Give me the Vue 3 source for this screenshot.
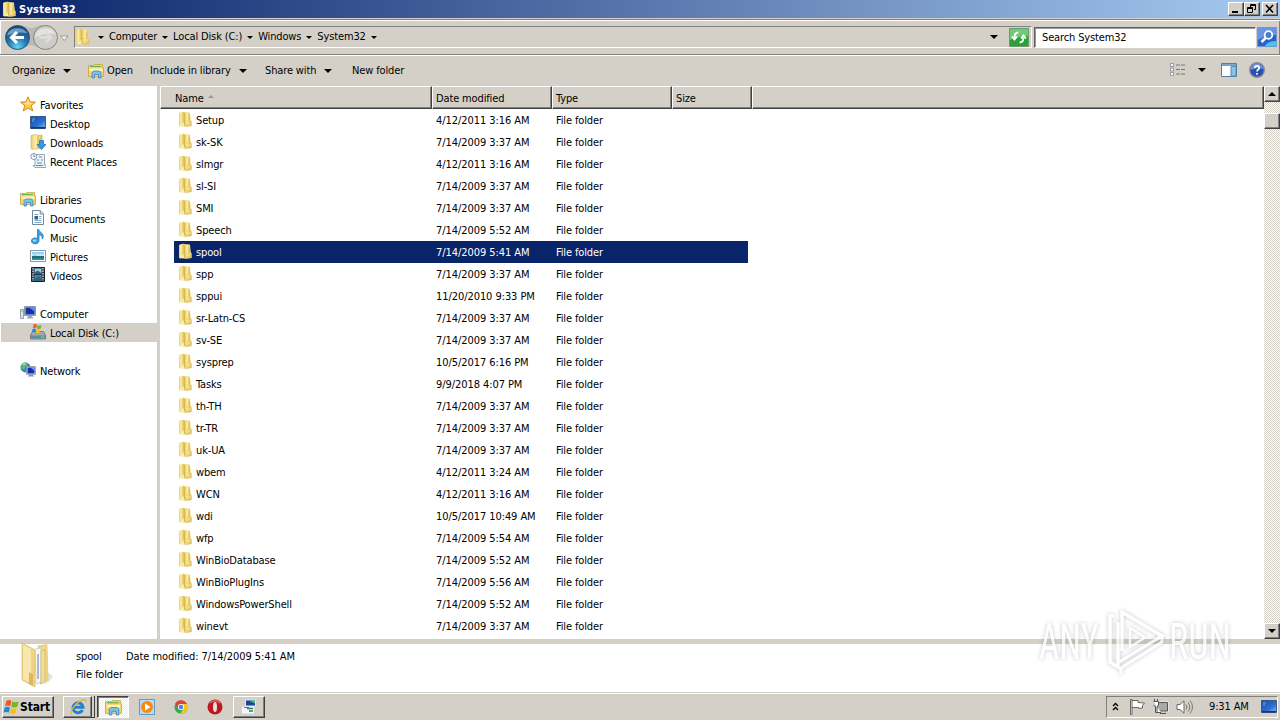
<script setup>
import { ref } from "vue";

const crumbs = ["Computer", "Local Disk (C:)", "Windows", "System32"];

const groups = [
  {
    label: "Favorites",
    icon: "star",
    items: [
      { label: "Desktop", icon: "desktop" },
      { label: "Downloads", icon: "downloads" },
      { label: "Recent Places", icon: "recent" },
    ],
  },
  {
    label: "Libraries",
    icon: "library",
    items: [
      { label: "Documents", icon: "document" },
      { label: "Music", icon: "music" },
      { label: "Pictures", icon: "picture" },
      { label: "Videos", icon: "video" },
    ],
  },
  {
    label: "Computer",
    icon: "computer",
    items: [{ label: "Local Disk (C:)", icon: "disk", active: true }],
  },
  { label: "Network", icon: "network", items: [] },
];

const files = [
  ["Setup", "4/12/2011 3:16 AM"],
  ["sk-SK", "7/14/2009 3:37 AM"],
  ["slmgr", "4/12/2011 3:16 AM"],
  ["sl-SI", "7/14/2009 3:37 AM"],
  ["SMI", "7/14/2009 3:37 AM"],
  ["Speech", "7/14/2009 5:52 AM"],
  ["spool", "7/14/2009 5:41 AM"],
  ["spp", "7/14/2009 3:37 AM"],
  ["sppui", "11/20/2010 9:33 PM"],
  ["sr-Latn-CS", "7/14/2009 3:37 AM"],
  ["sv-SE", "7/14/2009 3:37 AM"],
  ["sysprep", "10/5/2017 6:16 PM"],
  ["Tasks", "9/9/2018 4:07 PM"],
  ["th-TH", "7/14/2009 3:37 AM"],
  ["tr-TR", "7/14/2009 3:37 AM"],
  ["uk-UA", "7/14/2009 3:37 AM"],
  ["wbem", "4/12/2011 3:24 AM"],
  ["WCN", "4/12/2011 3:16 AM"],
  ["wdi", "10/5/2017 10:49 AM"],
  ["wfp", "7/14/2009 5:54 AM"],
  ["WinBioDatabase", "7/14/2009 5:52 AM"],
  ["WinBioPlugIns", "7/14/2009 5:56 AM"],
  ["WindowsPowerShell", "7/14/2009 5:52 AM"],
  ["winevt", "7/14/2009 3:37 AM"],
];

const selected = ref("spool");
</script>

<template>
  <div class="screen">
    <svg class="defs" width="0" height="0">
      <defs>
        <linearGradient id="gFolder" x1="0" x2="1" y1="0" y2="0">
          <stop offset="0" stop-color="#e9cf70" />
          <stop offset=".45" stop-color="#fbefae" />
          <stop offset="1" stop-color="#e3c357" />
        </linearGradient>
        <linearGradient id="gFront" x1="0" x2="1" y1="0" y2="1">
          <stop offset="0" stop-color="#fdf3b8" />
          <stop offset="1" stop-color="#dfbd52" />
        </linearGradient>
        <linearGradient id="gScreen" x1="0" x2="1" y1="0" y2="1">
          <stop offset="0" stop-color="#1c49a8" />
          <stop offset=".6" stop-color="#2b6fd0" />
          <stop offset="1" stop-color="#7ec4f2" />
        </linearGradient>
        <linearGradient id="gSky" x1="0" x2="0" y1="0" y2="1">
          <stop offset="0" stop-color="#7cc8f0" />
          <stop offset=".5" stop-color="#d8f0f8" />
          <stop offset=".55" stop-color="#2d7f78" />
          <stop offset="1" stop-color="#2a8ac8" />
        </linearGradient>
        <radialGradient id="gBack" cx=".5" cy=".9" r=".8">
          <stop offset="0" stop-color="#5fd6fa" />
          <stop offset=".5" stop-color="#2379b4" />
          <stop offset="1" stop-color="#174a7c" />
        </radialGradient>
        <symbol id="folder" viewBox="0 0 16 16">
          <path d="M2 2 6 .8 13 1.800l.8 7.500.8 1V15l-6 .8-6.200-.8z" fill="#f0dc8c" />
          <path d="M2 2 6.500.8v13.700L3.500 15.500 2 14.800z" fill="url(#gFolder)" />
          <path d="M6.500 1.200 8 2v12l-1.500 1z" fill="#d9b84e" />
          <path d="M8 2.200 12.500 1.600l.8 8.400v4.500L8 14.500z" fill="url(#gFolder)" />
          <path d="m8 10 6.200.2v4.600L8.500 15.500z" fill="url(#gFront)" stroke="#d0ab45" stroke-width=".4" />
          <path d="M3 14.800 7 11v4z" fill="#fbefa8" />
          <path d="M12 3.500V9" stroke="#d6b550" stroke-width=".8" />
        </symbol>
        <symbol id="star" viewBox="0 0 16 16">
          <path d="m8 .8 2 5 5.500.3-4.300 3.500 1.600 5.400L8 12l-4.800 3 1.600-5.400L.5 6.100 6 5.800z" fill="#ffc94a" stroke="#e08a1c" />
          <path d="m8 3 1.200 3.700 3.300.2-5 2.200-4-2.200 3.200-.2z" fill="#ffe99a" />
        </symbol>
        <symbol id="desktop" viewBox="0 0 16 16">
          <path d="M.5 1.500h15v12H.5z" fill="url(#gScreen)" stroke="#3c5a88" />
          <path d="M1 12h14v1.500H1z" fill="#183868" />
          <path d="M2 4h3M2 6h2" stroke="#6cb0ec" />
        </symbol>
        <symbol id="downloads" viewBox="0 0 16 16">
          <path d="M1 1.500 6 .3 8 1.500v13L2 15.400l-1-.8zM8 1.500l4-.5V14l-4 1z" fill="url(#gFolder)" stroke="#d5ae49" stroke-width=".6" />
          <path d="M9.500 6.500h4v4H16L11.500 15.500 7 10.500h2.500z" fill="#2e9be6" stroke="#1b68b4" stroke-width=".7" />
        </symbol>
        <symbol id="recent" viewBox="0 0 16 16">
          <path d="M5 1.500h9.500V12H16v2.500H5l-2-2h2z" fill="#eef3f7" stroke="#7e94a6" stroke-width=".8" />
          <circle cx="3.800" cy="3.500" r="3" fill="#fff" stroke="#8395a5" />
          <path d="M3.800 1.500v2h1.500M9 4h3M7 7h2m2 0h2M7 10h5M6 12.500h7" stroke="#5587ac" fill="none" />
        </symbol>
        <symbol id="library" viewBox="0 0 16 16">
          <path d="M.5 2.500h5l1-1h8v3h1v9H.5z" fill="#f5d86c" stroke="#cba53a" stroke-width=".8" />
          <path d="M2 3.500h11" stroke="#62b565" stroke-width="1.200" />
          <path d="M1.500 5.500h13V8h-13z" fill="#fff2b4" />
          <path d="M4 15V9.500L5.500 8h6L13 9.500V15h-2.500v-3.500h-4V15z" fill="#7bc0ea" stroke="#3a86bd" stroke-width=".8" />
        </symbol>
        <symbol id="document" viewBox="0 0 16 16">
          <path d="M2.500.5h7.800L13.500 4v10.500h-11z" fill="#fff" stroke="#73889d" />
          <path d="M10.200.5V4h3.300" fill="#d7e7f4" stroke="#73889d" />
          <path d="M4.500 4.500h4m-4 8h7m-7-2h7m-2.500-2h2.500m-2.500-2h2.500" stroke="#7fa6cb" />
          <path d="M4.500 6h3.500v3.500H4.500z" fill="#2e5f93" />
        </symbol>
        <symbol id="music" viewBox="0 0 16 16">
          <path d="M7.500.5h1.300c.4 2.600 4.700 3.500 4.500 7.200-.1 1-.5 1.800-1.300 2.500 1-3-1.300-4-3-4.400v6.200A3.800 3 0 1 1 7.500 9.500z" fill="#3ba0e2" stroke="#1e6fae" stroke-width=".7" />
          <ellipse cx="4.600" cy="11.500" rx="1.700" ry="1" fill="#a5e0ff" />
        </symbol>
        <symbol id="picture" viewBox="0 0 16 16">
          <path d="M.5 2.500h15v11H.5z" fill="#fff" stroke="#8496a8" />
          <path d="M2 4h12v8H2z" fill="url(#gSky)" />
          <path d="M2 8.500c3-2 6 1 12-.5v2H2z" fill="#286d69" />
        </symbol>
        <symbol id="video" viewBox="0 0 16 16">
          <path d="M1.500.5h13v14h-13z" fill="#27313c" stroke="#18202a" />
          <path d="M3 1v13M13 1v13" stroke="#e6edf2" stroke-width="1.200" stroke-dasharray="1.500 1" />
          <path d="M4.500 1.500h7V7h-7z" fill="#9ccbe9" />
          <path d="M4.500 8h7v6h-7z" fill="#3f86cc" />
          <path d="m4.500 5.500 3-2 4 2.500v1h-7zm0 7 4-3.500 3 2.500V14h-7z" fill="#2d667c" />
        </symbol>
        <symbol id="computer" viewBox="0 0 16 16">
          <path d="M.5 4.500h3v9h-3z" fill="#dfe4e8" stroke="#7e8b98" stroke-width=".8" />
          <path d="M1.200 6h1.600" stroke="#5bb54c" />
          <path d="M4.500 1.500h11v9h-11z" fill="#c9d3df" stroke="#8996a8" />
          <path d="M5.500 2.500h9v7h-9z" fill="#1730a8" />
          <path d="M9 2.500h5.500v4z" fill="#5e8ce2" />
          <path d="M8.500 11h3l2 2.500h-7z" fill="#9aa6b4" />
        </symbol>
        <symbol id="flag" viewBox="0 0 16 16">
          <path d="M3.200 1.600c2-1.200 3.300-.8 4.700.2L6.900 6.800C5.400 5.900 4 6 2 6.900z" fill="#ef5a24" />
          <path d="M8.800 2.300c2 1 3.700 1 6 0l-1.400 5c-2 1-3.700 1-5.600 0z" fill="#72b829" />
          <path d="M1.600 8c2-1 3.500-1 5 0l-1.200 5C4 12 2.400 12 .4 12.800z" fill="#2687d8" />
          <path d="M7.500 8.400c1.800 1 3.400 1 5.500 0l-1.400 5c-2 1-3.400 1-5.200 0z" fill="#fbbd18" />
        </symbol>
        <symbol id="disk" viewBox="0 0 16 16">
          <path d="m.5 11 2-3.500h11l2 3.500v4H.5z" fill="#9ea9b2" stroke="#65727e" stroke-width=".8" />
          <path d="M1 11.500h14v3H1z" fill="#5f8fa4" />
          <path d="M11 13h3" stroke="#60e05c" stroke-width="1.400" />
          <use href="#flag" x="1" y="-.5" width="12" height="11" />
        </symbol>
        <symbol id="network" viewBox="0 0 16 16">
          <circle cx="5.500" cy="5.500" r="5" fill="#2a86d0" />
          <path d="M2 2.500C4 0 7 .5 8 2L5.500 4.500 4 8 1 6z" fill="#5fbd61" />
          <path d="M3 2.500 5.500 2" stroke="#c5f1ee" />
          <path d="M6.500 4.500h9v8h-9z" fill="#d5dee8" stroke="#8592a5" stroke-width=".8" />
          <path d="M7.500 5.500h7v6h-7z" fill="#152fac" />
          <path d="M10.500 5.500h4V9z" fill="#7395ec" />
          <path d="M9 13h4l1 1.500H8z" fill="#8591a0" />
        </symbol>
      </defs>
    </svg>

    <header class="titlebar">
      <svg class="title-icon" width="16" height="16"><use href="#folder" /></svg>
      <span class="title-text">System32</span>
      <div class="win-buttons">
        <button class="win-btn"><svg width="12" height="10"><path d="M2 8h6" stroke="#000" stroke-width="2" /></svg></button>
        <button class="win-btn">
          <svg width="12" height="10" fill="none" stroke="#000"><path d="M4.500 3V.5h5v5H8M4 1.500h6M1.500 3.500h5v5h-5zM1 4.500h6" /></svg>
        </button>
        <button class="win-btn close"><svg width="12" height="10"><path d="m2 1 7 7.500M9 1 2 8.500" stroke="#000" stroke-width="1.600" /></svg></button>
      </div>
    </header>

    <nav class="navbar">
      <svg class="travel" width="70" height="32" viewBox="0 0 70 32">
        <path d="M17 4.500C24 3 28 7 31 7s8-4 15-2.500V27c-7 1.500-12-3-15-3s-7 4-14 3z" fill="#b9b9b5" />
        <circle cx="17.500" cy="16.500" r="12" fill="url(#gBack)" stroke="#31536f" />
        <path d="M7.500 12.500a11 9 0 0 1 20 0q-10-3-20 2z" fill="#9cc5de" opacity=".65" />
        <path d="m17 11-5.500 5.500 5.500 5.500M12 16.500H24" fill="none" stroke="#fff" stroke-width="3" />
        <circle cx="45.500" cy="16.500" r="12" fill="#cdccc9" stroke="#858585" />
        <path d="M35.500 13.500a10.500 9 0 0 1 20 0q-10-3-20 3z" fill="#e4e3e1" />
        <path d="m46 11.500 5 5-5 5M39 16.500h11" fill="none" stroke="#dddcd9" stroke-width="2.500" />
        <path d="M60.500 15h7.500L64.200 19.500z" fill="#f5f5f5" stroke="#888" stroke-width=".8" />
      </svg>
      <div class="address">
        <svg class="address-icon" width="17" height="17"><use href="#folder" /></svg>
        <i class="caret small"></i>
        <template v-for="crumb in crumbs" :key="crumb">
          <span class="crumb">{{ crumb }}</span>
          <i class="caret small"></i>
        </template>
        <i class="caret address-drop"></i>
        <svg class="refresh" width="20" height="19" viewBox="0 0 20 19">
          <path d="M.5.5h19v18H.5z" fill="#27a331" stroke="#6d9a70" />
          <path d="M1 1h18v7Q9 8 1 12z" fill="#72c877" />
          <path d="M9.500 4.500q-4 0-4 5M3 8.500l2.500 3L8 8.500M10.500 14.500q4 0 4-5M12 10.500l2.500-3 2.500 3" fill="none" stroke="#fff" stroke-width="1.800" />
        </svg>
      </div>
      <div class="search">Search System32</div>
      <svg class="search-btn" width="20" height="20" viewBox="0 0 20 20">
        <path d="M.5.5h19v19H.5z" fill="#2563cc" stroke="#7695cb" />
        <path d="M1 1h18v7Q9 8 1 13z" fill="#6d94e0" />
        <path d="M8 19q3-5 11-5v5z" fill="#46c5f1" />
        <circle cx="11.500" cy="8" r="3.800" fill="#477bd5" stroke="#fff" stroke-width="1.800" />
        <path d="m8.500 11-4 4" stroke="#fff" stroke-width="2.500" />
      </svg>
    </nav>

    <div class="toolbar">
      <span class="tool organize">Organize <i class="caret"></i></span>
      <span class="tool open"><svg width="16" height="16"><use href="#library" /></svg>Open</span>
      <span class="tool include">Include in library <i class="caret"></i></span>
      <span class="tool share">Share with <i class="caret"></i></span>
      <span class="tool">New folder</span>
      <div class="tool-right">
        <svg width="16" height="13" viewBox="0 0 16 13">
          <path d="M.5.5h3v3h-3zm0 4.500h3v3h-3zm0 4.500h3v3h-3z" fill="#fff" stroke="#7f8790" stroke-width=".8" />
          <path d="M6 2h4m1 0h4M6 6.500h4m1 0h4M6 11h4m1 0h4" stroke="#69788f" />
        </svg>
        <i class="caret view-caret"></i>
        <svg width="16" height="14" viewBox="0 0 16 14">
          <path d="M.5.500h15v13H.5z" fill="#fff" stroke="#567b9c" />
          <path d="M1 1h14v2H1z" fill="#7aa4c8" />
          <path d="M10 3.500h5V13h-5z" fill="#8cc4e5" stroke="#4b8fb8" />
        </svg>
        <svg class="help" width="16" height="16" viewBox="0 0 16 16">
          <circle cx="8" cy="8" r="7.300" fill="#2b4fae" stroke="#848e9f" stroke-width="1.400" />
          <path d="M2 7a6 5.500 0 0 1 12 0Q8 5 2 8z" fill="#6e90da" />
          <path d="M5.800 6q0-2.200 2.200-2.200T10.200 6q0 1-1.200 1.800-1 .6-1 1.700M8 11v1.800" fill="none" stroke="#fff" stroke-width="1.700" />
        </svg>
      </div>
    </div>

    <main class="body">
      <aside class="tree">
        <section v-for="g in groups" :key="g.label" class="group">
          <div class="node root">
            <svg width="16" height="16"><use :href="'#' + g.icon" /></svg><span>{{ g.label }}</span>
          </div>
          <div v-for="n in g.items" :key="n.label" class="node" :class="{ active: n.active }">
            <svg width="16" height="16"><use :href="'#' + n.icon" /></svg><span>{{ n.label }}</span>
          </div>
        </section>
      </aside>

      <section class="list">
        <div class="columns">
          <div class="col name">Name <i class="sort"></i></div>
          <div class="col date">Date modified</div>
          <div class="col type">Type</div>
          <div class="col size">Size</div>
          <div class="col rest"></div>
        </div>
        <div
          v-for="[name, date] in files"
          :key="name"
          class="row"
          :class="{ selected: name === selected }"
          @click="selected = name"
        >
          <svg class="row-icon" width="16" height="16"><use href="#folder" /></svg>
          <span class="cell-name">{{ name }}</span>
          <span class="cell-date">{{ date }}</span>
          <span class="cell-type">File folder</span>
        </div>
      </section>

      <div class="scrollbar">
        <button class="sb"><i class="caret up"></i></button>
        <div class="thumb"></div>
        <button class="sb down"><i class="caret"></i></button>
      </div>
    </main>

    <footer class="details">
      <svg class="big-folder" width="36" height="46" viewBox="0 0 36 46">
        <path d="M26 30l6 4-4 6-6 3z" fill="#dcdad2" opacity=".7" />
        <path d="M17 4 26 2.500 27 38l-8 4z" fill="#efd88a" stroke="#d6ba68" stroke-width=".6" />
        <path d="M14 7 20 6v34l-5 2z" fill="#f7f7f5" stroke="#b9bdc2" stroke-width=".6" />
        <path d="M17 12v25" stroke="#8fa6c8" stroke-width="1.500" />
        <path d="M20 9 24 8v31l-4 3z" fill="#f5df95" stroke="#c8a64d" stroke-width=".6" />
        <path d="m1 1 13 7v37L1 38z" fill="#eed584" stroke="#d8bc6c" stroke-width=".7" />
        <path d="m2 2.500 8 4.500v34l-8-4z" fill="#f8e7ac" />
        <path d="M8 30v12l4 2V32z" fill="#dcb85a" />
      </svg>
      <div class="info">
        <div class="info-line"><span class="info-name">{{ selected }}</span><span class="info-date">Date modified: 7/14/2009 5:41 AM</span></div>
        <div class="info-line">File folder</div>
      </div>
    </footer>

    <div class="taskbar">
      <button class="start"><svg width="17" height="17"><use href="#flag" /></svg><b>Start</b></button>
      <div class="task raised ie">
        <svg width="18" height="18" viewBox="0 0 18 18">
          <path d="M13.500 12A5 5 0 1 1 14 9.200H5" fill="none" stroke="#2483cf" stroke-width="3" />
          <path d="M3 16.500C-1.500 15.500 8 2 15.500 1.500c2 0 1.500 2 1 3" fill="none" stroke="#e9b531" stroke-width="1.300" />
        </svg>
      </div>
      <div class="edge"></div>
      <div class="task pressed"><svg width="17" height="17"><use href="#library" /></svg></div>
      <div class="task wmp">
        <svg width="16" height="16" viewBox="0 0 16 16">
          <path d="M.5.5h15v15H.5z" fill="#b9dcf3" stroke="#5b9bce" />
          <circle cx="8" cy="8" r="6" fill="#f48b16" />
          <path d="m6 4.500 5.500 3.500L6 11.500z" fill="#fff" />
        </svg>
      </div>
      <div class="task chrome">
        <svg width="14" height="14" viewBox="0 0 16 16">
          <circle cx="8" cy="8" r="7.500" fill="#36a853" />
          <path d="M1.500 4.200A7.500 7.500 0 0 1 14.700 4.500H8L5 10z" fill="#e34234" />
          <path d="M14.700 4.500A7.500 7.500 0 0 1 7.500 15.500L11 9.500 9 4.500z" fill="#fcc31e" />
          <circle cx="8" cy="8" r="3.500" fill="#fff" />
          <circle cx="8" cy="8" r="2.600" fill="#4285f4" />
        </svg>
      </div>
      <div class="task opera">
        <svg width="16" height="16" viewBox="0 0 16 16">
          <circle cx="8" cy="8" r="7.500" fill="#bd1722" />
          <path d="M3 4a6 5 0 0 1 10 0" stroke="#e5676a" fill="none" stroke-width="1.500" />
          <ellipse cx="8" cy="8" rx="2" ry="5" fill="#efdede" />
        </svg>
      </div>
      <div class="task raised app">
        <svg width="16" height="16" viewBox="0 0 16 16">
          <path d="M4 .5h11v7H4z" fill="#dfe8ef" />
          <path d="M5 1.500h9v5H5z" fill="#1747a0" />
          <path d="M8 1.500h6v3z" fill="#5bbf70" />
          <path d="M1 7.500h12v7H1z" fill="#f3f5f7" />
          <path d="M6 9.500h6m-4 2.500h4" stroke="#2f7f6a" stroke-width="1.600" />
          <path d="M3 8.500h5" stroke="#5673a1" />
        </svg>
      </div>
      <div class="tray">
        <svg class="chev" width="7" height="9" viewBox="0 0 7 9"><path d="m1 4 2.500-2.500L6 4M1 8l2.500-2.500L6 8" fill="none" stroke="#000" stroke-width="1.400" /></svg>
        <svg class="tray-flag" width="16" height="16" viewBox="0 0 16 16">
          <path d="M1.500.5h1.500v15H1.500zM3 1.500h6v2l6.500.500-2 2.500v2.500l-4 .5V8.500H3" fill="#fff" stroke="#666" />
        </svg>
        <svg class="tray-net" width="17" height="16" viewBox="0 0 17 16">
          <path d="M5.500 3.500h10v8h-10z" fill="#b1b1ae" stroke="#fff" stroke-width="2" />
          <path d="M5.500 3.500h10v8.500h-10zM8 14.500h6" fill="#aaa" stroke="#555" />
          <path d="M1.500 2.500h5v4l-1.500 1v6h4M2.500 0v3m3-3v3M1.500 6.500l2 1v6h3" fill="#fff" stroke="#555" />
        </svg>
        <svg class="tray-sound" width="17" height="14" viewBox="0 0 17 14">
          <path d="M1 4.500h3L8 .8v12.400L4 9.500H1z" fill="#fff" stroke="#666" />
          <path d="M10 4.500q2 2.500 0 5m2-7q3.500 4.500 0 9m2-11q5 6.500 0 13" fill="none" stroke="#777" />
        </svg>
        <span class="clock">9:31 AM</span>
        <svg class="tray-desk" width="16" height="14" viewBox="0 1 16 14"><use href="#desktop" width="16" height="16" /></svg>
      </div>
    </div>

    <svg class="watermark" width="240" height="90" viewBox="0 0 240 90">
      <g class="mark" fill="#fff">
        <text x="4" y="54" textLength="60" lengthAdjust="spacingAndGlyphs">ANY</text>
        <text x="134" y="54" textLength="62" lengthAdjust="spacingAndGlyphs">RUN</text>
        <g fill="none" stroke="#fff" stroke-width="3.500">
          <path d="M87 46V7l40 24-5 3" />
          <path d="M79 11h-4v46l8 5V17" />
          <path d="M95 23v19l15-9.500z" stroke-width="2.500" />
          <path d="m84 57 43-26v6L86 63v6" stroke-width="3" />
        </g>
      </g>
    </svg>
  </div>
</template>

<style>
body {
  margin: 0;
  overflow: hidden;
}
</style>

<style scoped>
.screen {
  position: relative;
  width: 1280px;
  height: 720px;
  display: flex;
  flex-direction: column;
  overflow: hidden;
  background: #d4d0c8;
  color: #000;
  font-family: "DejaVu Sans Condensed", "DejaVu Sans", sans-serif;
  font-stretch: condensed;
  font-size: 11px;
  letter-spacing: -0.14px;
  line-height: 14px;
  white-space: nowrap;
}

.screen * {
  box-sizing: border-box;
}

.defs {
  position: absolute;
}

svg {
  display: block;
  flex: none;
}

button {
  padding: 0;
  border: 1px solid;
  border-color: #fff #404040 #404040 #fff;
  box-shadow: inset -1px -1px #808080;
  background: #d4d0c8;
  font: inherit;
  letter-spacing: inherit;
}

.caret {
  display: inline-block;
  flex: none;
  border: 4px solid transparent;
  border-top-color: #000;
  border-bottom: 0;
}

.caret.small {
  border-width: 3px 3px 0;
}

.caret.up {
  border-top: 0;
  border-bottom: 4px solid #000;
}

.titlebar {
  height: 18px;
  flex: none;
  display: flex;
  align-items: center;
  padding: 0 2px 0 1px;
  background: linear-gradient(90deg, #0a246a, #a6caf0);
}

.title-text {
  margin-left: 2px;
  padding-top: 1px;
  color: #fff;
  font-weight: bold;
  letter-spacing: 0.25px;
}

.win-buttons {
  display: flex;
  margin-left: auto;
}

.win-btn {
  width: 16px;
  height: 14px;
  display: flex;
  justify-content: center;
  align-items: center;
}

.win-btn.close {
  margin-left: 2px;
}

.navbar {
  height: 36px;
  flex: none;
  display: flex;
  align-items: center;
  margin-top: 1px;
  border-top: 1px solid #808080;
  border-bottom: 1px solid #808080;
  box-shadow: inset 1px 1px #fff, inset -1px 0 #808080, 0 1px #fff;
}

.address {
  width: 958px;
  height: 22px;
  display: flex;
  align-items: center;
  margin-left: 4px;
  border: 1px solid;
  border-color: #808080 #fff #fff #808080;
}

.address-icon {
  margin: 0 7px 2px -1px;
}

.crumb {
  margin: 0 5px;
}

.address-drop {
  margin-left: auto;
}

.refresh {
  margin: 0 2px 0 11px;
}

.search {
  width: 222px;
  height: 21px;
  margin-left: 2px;
  padding: 3px 7px;
  background: #fff;
  border: 1px solid;
  border-color: #606060 #fff #fff #606060;
  box-shadow: inset 1px 1px #999;
}

.search-btn {
  margin-left: 1px;
}

.toolbar {
  height: 31px;
  flex: none;
  display: flex;
  align-items: center;
  padding-left: 12px;
}

.tool {
  display: flex;
  align-items: center;
}

.tool .caret {
  margin-left: 8px;
}

.organize {
  width: 76px;
}

.open {
  width: 62px;
}

.open svg {
  margin-right: 3px;
}

.include {
  width: 115px;
}

.share {
  width: 87px;
}

.tool-right {
  display: flex;
  align-items: center;
  margin: -2px 15px 0 auto;
}

.view-caret {
  margin: 0 15px 0 12px;
}

.help {
  margin-left: 12px;
}

.body {
  height: 553px;
  flex: none;
  display: flex;
}

.tree {
  width: 160px;
  flex: none;
  padding-top: 9px;
  background: #fff;
  border-right: 3px solid #d4d0c8;
}

.group {
  margin-bottom: 19px;
}

.node {
  height: 19px;
  display: flex;
  align-items: center;
  gap: 4px;
  margin-left: 1px;
  padding-left: 29px;
}

.node.root {
  padding-left: 19px;
}

.node svg {
  margin-bottom: 1px;
}

.node span {
  padding-top: 2px;
}

.node.active {
  background: #d4d0c8;
}

.list {
  flex: 1;
  background: #fff;
}

.columns {
  height: 23px;
  display: flex;
  background: #d4d0c8;
}

.col {
  height: 23px;
  padding: 5px 3px 0;
  border-top: 1px solid #fff;
  border-left: 1px solid #fff;
  border-right: 1px solid #404040;
  border-bottom: 1px solid #404040;
  box-shadow: inset -1px -1px #808080;
}

.col.name {
  width: 272px;
  padding-left: 14px;
}

.col.date,
.col.type {
  width: 120px;
}

.col.size {
  width: 80px;
}

.col.rest {
  flex: 1;
}

.sort {
  display: inline-block;
  margin: 0 0 4px 1px;
  border: 3px solid transparent;
  border-top: 0;
  border-bottom-color: #999;
}

.row {
  width: 574px;
  height: 22px;
  display: flex;
  align-items: center;
  margin-left: 14px;
}

.row.selected {
  background: #0a246a;
  color: #fff;
}

.row span {
  padding-top: 2px;
}

.row-icon {
  margin: 0 3px 3px 3px;
}

.cell-name {
  width: 240px;
}

.cell-date {
  width: 120px;
}

.cell-date,
.info-date {
  letter-spacing: -0.07px;
}

.scrollbar {
  width: 16px;
  flex: none;
  display: flex;
  flex-direction: column;
  background: repeating-conic-gradient(#fff 0 25%, #d4d0c8 0 50%) 0 0 / 2px 2px;
}

.sb {
  width: 16px;
  height: 16px;
  display: flex;
  align-items: center;
  justify-content: center;
}

.sb.down {
  margin-top: auto;
}

.thumb {
  height: 16px;
  margin-top: 11px;
  background: #d4d0c8;
  border: 1px solid;
  border-color: #fff #404040 #404040 #fff;
  box-shadow: inset -1px -1px #808080;
}

.details {
  height: 53px;
  flex: none;
  display: flex;
  padding-left: 21px;
  background: #fff;
  border-top: 5px solid #d4d0c8;
}

.big-folder {
  margin-top: -2px;
}

.info {
  margin-left: 19px;
  padding-top: 6px;
}

.info-line {
  height: 18px;
  display: flex;
}

.info-name {
  width: 50px;
}

.taskbar {
  height: 28px;
  flex: none;
  display: flex;
  align-items: center;
  padding: 1px 2px 0 2px;
  border-top: 1px solid #d4d0c8;
  box-shadow: inset 0 1px #fff;
}

.start {
  width: 52px;
  height: 22px;
  display: flex;
  align-items: center;
  font-size: 12px;
}

.task {
  width: 30px;
  height: 22px;
  display: flex;
  align-items: center;
  justify-content: center;
}

.raised {
  border: 1px solid;
  border-color: #fff #404040 #404040 #fff;
  box-shadow: inset -1px -1px #808080;
}

.ie {
  width: 29px;
  margin-left: 9px;
}

.edge {
  width: 3px;
  height: 22px;
  border-right: 1px solid #404040;
  border-bottom: 1px solid #404040;
}

.pressed {
  width: 32px;
  margin-left: 2px;
  border: 1px solid;
  border-color: #404040 #fff #fff #404040;
  box-shadow: inset 1px 1px #808080;
  background: repeating-conic-gradient(#fff 0 25%, #f0eeea 0 50%) 0 0 / 2px 2px;
}

.wmp {
  width: 34px;
  margin-left: 1px;
}

.chrome,
.opera {
  width: 34px;
}

.app {
  width: 32px;
  margin-left: 1px;
}

.tray {
  width: 172px;
  height: 22px;
  display: flex;
  align-items: center;
  margin-left: auto;
  padding-left: 5px;
  border: 1px solid;
  border-color: #808080 #fff #fff #808080;
}

.chev {
  margin-bottom: 2px;
}

.tray-flag {
  margin-left: 10px;
}

.tray-net {
  margin-left: 7px;
}

.tray-sound {
  margin-left: 7px;
}

.clock {
  margin-left: 16px;
}

.tray-desk {
  margin-left: auto;
}

/* Overlay mark sits above the details pane */
.watermark {
  position: absolute;
  left: 1035px;
  top: 605px;
  pointer-events: none;
}

.mark {
  font-family: Roboto, sans-serif;
  font-size: 50px;
  line-height: 60px;
  letter-spacing: 0;
  opacity: 0.75;
  filter: drop-shadow(0 0 2px rgba(0, 0, 0, 0.3));
}
</style>
